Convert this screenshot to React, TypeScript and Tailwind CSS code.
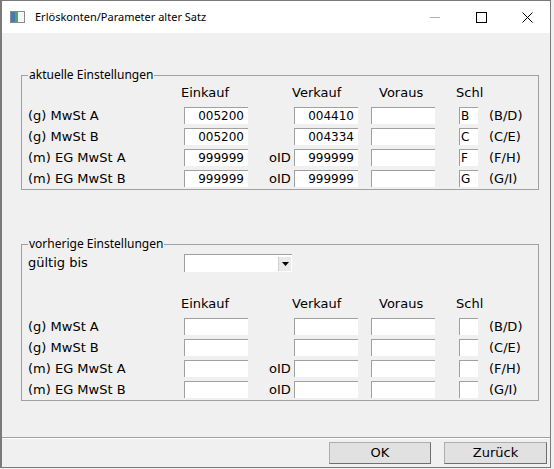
import React from "react";

type Row = { label: string; ek: string; oid: boolean; vk: string; schl: string; code: string };

const current: Row[] = [
  { label: "(g) MwSt A", ek: "005200", oid: false, vk: "004410", schl: "B", code: "(B/D)" },
  { label: "(g) MwSt B", ek: "005200", oid: false, vk: "004334", schl: "C", code: "(C/E)" },
  { label: "(m) EG MwSt A", ek: "999999", oid: true, vk: "999999", schl: "F", code: "(F/H)" },
  { label: "(m) EG MwSt B", ek: "999999", oid: true, vk: "999999", schl: "G", code: "(G/I)" },
];

const previous: Row[] = current.map((r) => ({ ...r, ek: "", vk: "", schl: "" }));

function Field({ value = "", w, left = false }: { value?: string; w: string; left?: boolean }) {
  return (
    <div
      className={`${w} h-[17px] bg-white border-t border-l border-[#a0a0a0] flex items-center text-[12px] text-black ${
        left ? "justify-start pl-px" : "justify-end pr-[4px]"
      }`}
    >
      {value}
    </div>
  );
}

function Header() {
  return (
    <div className="flex h-[18px] items-center">
      <span className="w-[153px]" />
      <span className="w-[111px]">Einkauf</span>
      <span className="w-[87px]">Verkauf</span>
      <span className="w-[77px]">Voraus</span>
      <span>Schl</span>
    </div>
  );
}

function Rows({ rows }: { rows: Row[] }) {
  return (
    <div className="flex flex-col gap-[4px] mt-[5px]">
      {rows.map((r) => (
        <div key={r.label} className="flex h-[17px] items-center">
          <span className="w-[156px]">{r.label}</span>
          <Field value={r.ek} w="w-[64px]" />
          <span className="w-[46px] pl-[21px]">{r.oid ? "oID" : ""}</span>
          <Field value={r.vk} w="w-[64px]" />
          <span className="w-[13px]" />
          <Field w="w-[64px]" />
          <span className="w-[24px]" />
          <Field value={r.schl} w="w-[19px]" left />
          <span className="w-[11px]" />
          <span>{r.code}</span>
        </div>
      ))}
    </div>
  );
}

function Group({ title, children, mt }: { title: string; children: React.ReactNode; mt: string }) {
  return (
    <fieldset className={`${mt} ml-[19px] w-[518px] border border-[#a0a0a0] px-0 pb-[2px]`}>
      <legend className="ml-[6px] px-px font-['Noto_Sans',sans-serif] text-[12px] leading-4 text-black">
        {title}
      </legend>
      <div className="pl-[6px] pt-px">{children}</div>
    </fieldset>
  );
}

export default function App() {
  return (
    <div className="w-[554px] h-[469px] bg-[#f0f0f0]">
      <div className="w-[551px] h-[468px] border border-[#7a7a7a] border-l-2 flex flex-col font-['DejaVu_Sans',sans-serif] text-[13px] text-black">
        <div className="h-[32px] bg-white flex items-center">
          <svg width="15" height="12" viewBox="0 0 15 12" className="ml-[8px] mr-[10px]">
            <rect x="0.5" y="0.5" width="14" height="11" fill="#eef2f4" stroke="#8a8a8a" />
            <rect x="1" y="1" width="4" height="10" fill="#3d7fb0" />
            <rect x="5" y="1" width="3" height="10" fill="#58a070" />
            <rect x="8" y="1" width="6" height="10" fill="#f4f6f7" />
          </svg>
          <span className="font-['Noto_Sans',sans-serif] text-[11px] text-black pt-px">Erlöskonten/Parameter alter Satz</span>
          <div className="ml-auto flex h-full">
            <div className="w-[46px] flex items-center justify-center">
              <svg width="10" height="10" viewBox="0 0 10 10">
                <line x1="0" y1="5.5" x2="10" y2="5.5" stroke="#b0b0b0" />
              </svg>
            </div>
            <div className="w-[46px] flex items-center justify-center">
              <svg width="11" height="11" viewBox="0 0 11 11">
                <rect x="0.5" y="0.5" width="10" height="10" fill="none" stroke="#000" />
              </svg>
            </div>
            <div className="w-[46px] flex items-center justify-center">
              <svg width="11" height="11" viewBox="0 0 11 11">
                <path d="M0.5 0.5 L10.5 10.5 M10.5 0.5 L0.5 10.5" stroke="#000" />
              </svg>
            </div>
          </div>
        </div>

        <Group title="aktuelle Einstellungen" mt="mt-[34px]">
          <Header />
          <Rows rows={current} />
        </Group>

        <Group title="vorherige Einstellungen" mt="mt-[46px]">
          <div className="flex h-[18px] items-center mt-[1px]">
            <span className="w-[156px]">gültig bis</span>
            <div className="w-[108px] h-[18px] bg-white border-t border-l border-[#a0a0a0] flex items-center justify-end pr-[1px]">
              <div className="w-[13px] h-[14px] bg-[#e9e9e9] border-l border-[#d0d0d0] flex items-center justify-center">
                <svg width="7" height="4" viewBox="0 0 7 4">
                  <path d="M0 0 H7 L3.5 4 Z" fill="#000" />
                </svg>
              </div>
            </div>
          </div>
          <div className="mt-[23px]">
            <Header />
            <Rows rows={previous} />
          </div>
        </Group>

        <div className="mt-[36px] border-t border-[#a0a0a0] border-b border-b-white" />
        <div className="flex justify-end gap-[13px] pr-[3px] mt-[3px]">
          <button className="w-[102px] h-[22px] bg-[#e1e1e1] border border-[#adadad] border-r-[#6e6e6e] border-b-[#6e6e6e]">
            OK
          </button>
          <button className="w-[103px] h-[22px] bg-[#e1e1e1] border border-[#adadad] border-r-[#6e6e6e] border-b-[#6e6e6e]">
            Zurück
          </button>
        </div>
      </div>
    </div>
  );
}
